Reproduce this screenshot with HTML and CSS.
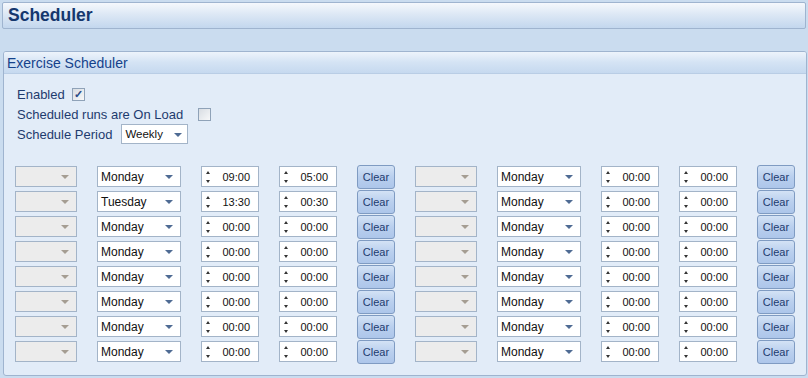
FILE: index.html
```html
<!DOCTYPE html>
<html lang="en">

<head>
    <meta charset="UTF-8">
    <meta name="viewport" content="width=device-width, initial-scale=1.0">
    <title>Scheduler</title>
    <link rel="stylesheet" href="styles.css">
</head>

<body>
    <div class="titlebar">Scheduler</div>
    <div class="panel">
        <div class="panel-head">Exercise Scheduler</div>
        <div class="panel-body">
            <div class="opt">Enabled <span class="chk on">&#10003;</span></div>
            <div class="opt">Scheduled runs are On Load <span class="chk"></span></div>
            <div class="opt">Schedule Period <span class="combo period">Weekly<i></i></span></div>

            <div class="grid" id="grid"></div>
        </div>
    </div>
    <script>
        var left = [["Monday", "09:00", "05:00"], ["Tuesday", "13:30", "00:30"]]
        var grid = document.querySelector("#grid")
        var html = ""
        for (var r = 0; r < 8; r++) {
            for (var c = 0; c < 2; c++) {
                var d = (c == 0 && left[r]) ? left[r] : ["Monday", "00:00", "00:00"]
                html += '<span class="combo off"><i></i></span>'
                html += '<span class="combo day">' + d[0] + '<i></i></span>'
                html += '<span class="spin"><b></b>' + d[1] + '</span>'
                html += '<span class="spin"><b></b>' + d[2] + '</span>'
                html += '<span class="btn">Clear</span>'
            }
        }
        grid.innerHTML = html
    </script>
</body>

</html>
```

FILE: styles.css
```css
* {
    margin: 0;
    padding: 0;
    box-sizing: border-box;
}

body {
    background: #cadcef;
    font-family: "Liberation Sans", Arial, sans-serif;
    padding: 2px 2px 0 2px;
    width: 808px;
    height: 378px;
    overflow: hidden;
}

.titlebar {
    height: 27px;
    width: 804px;
    border: 1px solid #9fb4cf;
    border-radius: 2px;
    background: linear-gradient(#f5f8fc, #dde8f5 45%, #c3d7ee);
    color: #15376e;
    font-weight: bold;
    font-size: 17.5px;
    line-height: 25px;
    padding-left: 5px;
}

.panel {
    margin: 22px 0 0 1px;
    width: 804px;
    height: 325px;
    border: 1px solid #9fb4cf;
    border-radius: 3px;
    background: #e2ecf8;
    overflow: hidden;
}

.panel-head {
    height: 22px;
    background: linear-gradient(#edf3fb, #d4e3f4 50%, #c6d9ef);
    border-bottom: 1px solid #b9cde5;
    color: #15428b;
    font-size: 14px;
    line-height: 22px;
    padding-left: 3px;
}

.panel-body {
    padding: 10px 0 0 11px;
}

.opt {
    height: 20px;
    display: flex;
    align-items: center;
    gap: 7px;
    font-size: 13px;
    color: #1e3b6e;
    padding-left: 2px;
}

.opt:nth-child(2) {
    gap: 15px;
}

.opt:nth-child(3) {
    gap: 9px;
}

.chk {
    width: 13px;
    height: 13px;
    border: 1px solid #8fa2b8;
    background: linear-gradient(135deg, #d8dde3, #f7f8f9);
    font-size: 11px;
    line-height: 11px;
    text-align: center;
    color: #2b4a86;
    font-weight: bold;
}

.combo {
    position: relative;
    display: inline-flex;
    align-items: center;
    height: 21px;
    border: 1px solid #a3b4c8;
    background: #fff;
    font-size: 12px;
    color: #111;
    padding-left: 3px;
}

.combo i {
    position: absolute;
    right: 7px;
    top: 8px;
    border-left: 4px solid transparent;
    border-right: 4px solid transparent;
    border-top: 4px solid #4f6b93;
}

.period {
    width: 67px;
    height: 20px;
    font-size: 11.5px;
}

.period i {
    right: 5px;
}

.grid {
    margin: 20px 0 0 0;
    display: grid;
    grid-template-columns: 62px 84px 58px 58px 38px 62px 84px 58px 58px 38px;
    grid-auto-rows: 25px;
    column-gap: 20px;
    align-items: center;
}

.combo.off {
    background: #ececec;
}

.combo.off i {
    border-top-color: #a59d92;
}

.spin {
    position: relative;
    display: flex;
    align-items: center;
    justify-content: flex-end;
    height: 21px;
    border: 1px solid #a3b4c8;
    background: #fff;
    font-size: 11px;
    color: #111;
    padding-right: 8px;
}

.spin b::before,
.spin b::after {
    content: "";
    position: absolute;
    left: 4px;
    border-left: 2px solid transparent;
    border-right: 2px solid transparent;
}

.spin b::before {
    top: 4px;
    border-bottom: 3px solid #333;
}

.spin b::after {
    bottom: 3px;
    border-top: 3px solid #333;
}

.btn {
    height: 24px;
    border: 1px solid #7f9bc2;
    border-radius: 3px;
    background: linear-gradient(#d3e2f5, #b9cfee 50%, #adc6ea);
    color: #1e3b6e;
    font-size: 11px;
    display: flex;
    align-items: center;
    justify-content: center;
}
```
